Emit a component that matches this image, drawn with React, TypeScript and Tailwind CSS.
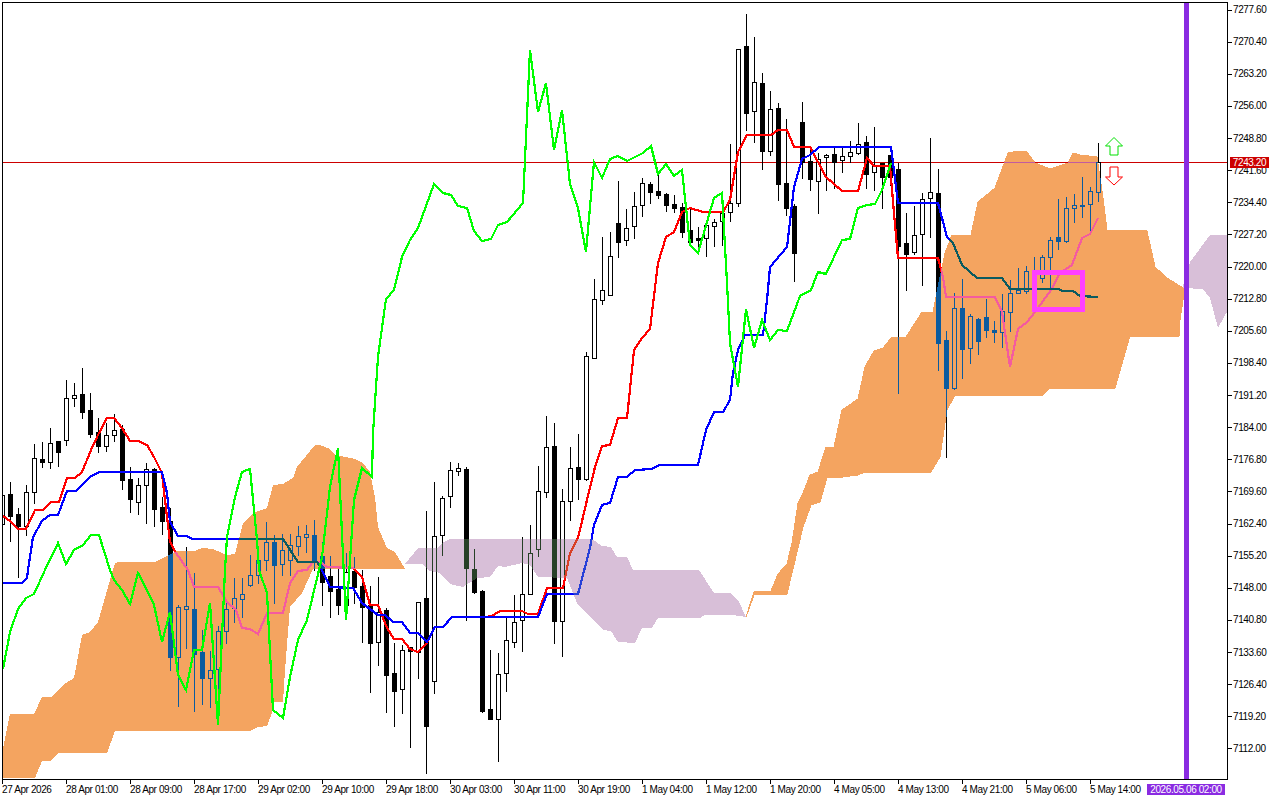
type Point = [number, number];
// high, body top, body bottom, low, 1 = bull (hollow)
type Candle = [number, number, number, number, number];

const candles: Candle[] = [
  [490, 495, 524, 540, 1], [482, 494, 516, 541, 0], [508, 514, 526, 577, 0], [485, 492, 526, 535, 1],
  [444, 458, 492, 503, 1], [442, 459, 462, 467, 0], [428, 443, 462, 468, 1], [441, 441, 452, 466, 0],
  [380, 398, 440, 445, 1], [383, 395, 398, 406, 1], [368, 394, 412, 418, 0], [393, 410, 434, 437, 0],
  [418, 432, 446, 452, 0], [423, 435, 446, 451, 1], [414, 430, 435, 441, 1], [425, 429, 480, 489, 0],
  [467, 479, 499, 512, 0], [478, 485, 502, 514, 1], [463, 469, 485, 523, 1], [468, 469, 509, 526, 0],
  [497, 507, 521, 534, 0], [508, 521, 657, 670, 0], [605, 607, 657, 706, 1], [547, 606, 609, 648, 1],
  [573, 609, 654, 711, 0], [630, 652, 678, 704, 0], [651, 670, 678, 707, 1], [626, 631, 669, 710, 1],
  [602, 609, 631, 643, 1], [578, 598, 608, 622, 1], [578, 594, 599, 617, 1], [555, 575, 585, 586, 1],
  [555, 560, 575, 583, 1], [522, 542, 560, 570, 1], [535, 542, 565, 603, 0], [534, 550, 564, 575, 1],
  [534, 545, 560, 575, 1], [526, 536, 546, 555, 1], [525, 534, 537, 552, 1], [520, 535, 560, 570, 0],
  [542, 556, 582, 605, 0], [556, 576, 591, 617, 0], [566, 589, 605, 614, 0], [553, 572, 605, 605, 1],
  [557, 571, 587, 603, 0], [570, 586, 607, 642, 0], [586, 605, 643, 692, 0], [577, 612, 642, 665, 1],
  [608, 610, 675, 712, 0], [643, 673, 691, 726, 0], [645, 650, 689, 713, 1], [647, 647, 651, 747, 0],
  [602, 602, 652, 678, 1], [511, 598, 726, 773, 0], [482, 536, 681, 693, 1], [496, 498, 535, 555, 1],
  [462, 470, 496, 507, 1], [463, 468, 471, 475, 1], [467, 469, 568, 620, 0], [549, 569, 592, 593, 0],
  [590, 591, 711, 712, 0], [650, 709, 719, 719, 0], [653, 674, 719, 761, 1], [618, 640, 673, 691, 1],
  [595, 622, 642, 647, 1], [537, 594, 620, 651, 1], [525, 553, 594, 594, 1], [466, 491, 549, 556, 1],
  [416, 447, 492, 497, 1], [423, 446, 621, 643, 0], [489, 501, 621, 656, 1], [447, 468, 501, 520, 1],
  [434, 467, 479, 499, 0], [352, 356, 479, 480, 1], [279, 299, 358, 358, 1], [237, 290, 300, 304, 1],
  [232, 256, 295, 295, 1], [181, 223, 242, 257, 0], [209, 228, 240, 245, 1], [192, 206, 226, 238, 1],
  [178, 183, 205, 216, 1], [182, 184, 192, 203, 0], [175, 191, 195, 198, 0], [193, 194, 205, 211, 0],
  [195, 204, 208, 212, 0], [203, 207, 232, 237, 0], [208, 230, 242, 242, 0], [227, 238, 240, 252, 0],
  [222, 225, 238, 256, 1], [219, 222, 226, 246, 1], [213, 213, 221, 245, 1], [144, 203, 212, 221, 1],
  [49, 49, 203, 206, 1], [14, 46, 113, 130, 0], [37, 82, 111, 142, 1], [73, 83, 151, 169, 0],
  [91, 109, 151, 155, 1], [103, 108, 184, 200, 0], [119, 183, 208, 215, 0], [204, 206, 253, 281, 0],
  [102, 122, 162, 178, 0], [147, 161, 179, 190, 0], [153, 159, 181, 213, 1], [154, 155, 157, 190, 1],
  [147, 154, 162, 188, 0], [148, 156, 160, 172, 1], [141, 152, 156, 162, 1], [123, 144, 153, 154, 1],
  [136, 142, 174, 188, 0], [127, 165, 172, 190, 1], [163, 163, 177, 208, 0], [155, 155, 177, 185, 0],
  [163, 169, 246, 393, 0], [213, 243, 254, 290, 0], [206, 235, 252, 254, 1], [193, 199, 234, 285, 1],
  [138, 192, 198, 237, 1], [169, 193, 343, 370, 0], [331, 340, 388, 457, 0], [293, 308, 388, 389, 1],
  [279, 308, 349, 378, 0], [314, 316, 348, 363, 1], [318, 319, 341, 354, 0], [299, 317, 330, 337, 0],
  [321, 330, 332, 342, 0], [294, 311, 332, 347, 1], [280, 293, 312, 331, 1], [268, 290, 293, 293, 1],
  [266, 271, 291, 293, 1], [257, 270, 285, 290, 0], [255, 257, 278, 282, 1], [237, 240, 257, 292, 1],
  [199, 237, 241, 249, 0], [197, 208, 241, 242, 1], [194, 205, 208, 222, 1], [177, 205, 206, 217, 0],
  [187, 191, 204, 232, 1], [143, 162, 192, 201, 1],
];

const tenkan: Point[] = [
  [3, 516], [10, 521], [18, 529], [26, 529], [35, 510], [43, 510], [51, 502], [59, 502], [67, 478], [75, 478],
  [82, 472], [91, 450], [98, 435], [107, 418], [114, 418], [122, 428], [130, 441], [138, 441], [147, 445],
  [154, 457], [162, 473], [165, 500], [170, 542], [176, 553], [188, 570], [194, 587], [218, 587], [227, 602],
  [236, 610], [242, 628], [250, 629], [258, 634], [267, 613], [283, 613], [290, 583], [298, 571], [307, 570],
  [313, 562], [320, 562], [327, 567], [353, 568], [362, 577], [370, 605], [378, 605], [387, 628], [394, 639],
  [402, 639], [410, 649], [418, 652], [427, 643], [435, 627], [443, 627], [452, 617], [486, 617], [492, 616],
  [500, 611], [522, 611], [528, 614], [538, 614], [547, 588], [563, 588], [570, 553], [578, 538], [587, 500],
  [595, 467], [602, 446], [610, 445], [618, 418], [627, 418], [629, 399], [634, 350], [642, 338], [650, 329],
  [658, 263], [666, 237], [674, 232], [682, 212], [690, 208], [703, 212], [723, 212], [730, 200], [738, 152],
  [747, 135], [771, 135], [778, 130], [787, 130], [794, 147], [810, 147], [826, 177], [842, 191], [858, 191],
  [867, 158], [874, 166], [890, 166], [894, 213], [898, 258], [938, 258], [943, 277], [946, 297], [995, 297],
  [1002, 312], [1010, 367], [1018, 329], [1027, 322], [1035, 312], [1051, 290], [1060, 273], [1072, 265],
  [1082, 238], [1090, 234], [1098, 218],
];

const kijun: Point[] = [
  [3, 583], [22, 583], [27, 578], [28, 570], [33, 537], [42, 521], [50, 515], [58, 515], [67, 491], [76, 491],
  [90, 477], [99, 472], [162, 472], [167, 493], [170, 522], [178, 536], [187, 536], [192, 539], [283, 539],
  [298, 562], [317, 562], [322, 570], [330, 587], [353, 588], [362, 603], [378, 615], [385, 615], [393, 622],
  [402, 622], [410, 633], [418, 633], [427, 642], [435, 627], [443, 627], [452, 617], [538, 617], [547, 594],
  [578, 594], [590, 548], [594, 525], [602, 505], [610, 503], [618, 477], [627, 477], [635, 470], [652, 469],
  [659, 465], [698, 465], [706, 430], [714, 412], [723, 412], [730, 400], [733, 373], [738, 350], [745, 335],
  [763, 335], [767, 300], [770, 267], [787, 247], [794, 187], [802, 159], [810, 155], [819, 147], [891, 147],
  [898, 203], [938, 203], [947, 237], [953, 243], [962, 265], [977, 278], [1002, 278], [1010, 289], [1058, 289],
  [1063, 291], [1073, 291], [1080, 296], [1098, 297],
];

const chikou: Point[] = [
  [3, 669], [10, 632], [18, 609], [26, 598], [34, 594], [45, 570], [58, 543], [66, 564], [74, 550], [83, 545],
  [91, 535], [99, 535], [110, 570], [114, 580], [122, 590], [130, 604], [138, 573], [147, 590], [154, 605],
  [162, 642], [170, 612], [178, 675], [186, 690], [194, 650], [202, 650], [210, 603], [218, 725], [225, 570],
  [227, 537], [235, 497], [242, 472], [250, 469], [257, 540], [259, 570], [267, 593], [273, 710], [283, 718],
  [290, 677], [298, 640], [307, 620], [319, 570], [322, 557], [330, 487], [338, 448], [346, 620], [354, 500],
  [362, 468], [372, 477], [373, 433], [378, 357], [386, 299], [394, 290], [402, 257], [410, 240], [418, 228],
  [434, 184], [443, 193], [451, 195], [458, 206], [467, 208], [474, 231], [482, 241], [491, 239], [498, 225],
  [507, 222], [523, 203], [530, 50], [538, 112], [546, 83], [554, 150], [562, 110], [570, 184], [578, 208],
  [586, 252], [594, 162], [602, 178], [610, 159], [618, 156], [627, 161], [643, 153], [651, 146], [658, 174],
  [666, 164], [674, 176], [682, 170], [690, 245], [698, 253], [714, 198], [722, 193], [727, 283], [730, 343],
  [738, 387], [746, 309], [754, 348], [762, 320], [770, 340], [778, 330], [787, 331], [800, 296], [811, 290],
  [818, 272], [826, 274], [842, 240], [850, 239], [858, 208], [867, 205], [875, 204], [882, 190], [891, 163],
];

const cloudBull: Point[] = [
  [3, 748], [10, 714], [34, 714], [42, 697], [52, 697], [63, 685], [74, 678], [82, 635], [90, 632], [98, 622],
  [110, 580], [115, 563], [118, 562], [155, 562], [177, 551], [195, 551], [202, 548], [213, 549], [227, 555],
  [235, 554], [243, 523], [253, 513], [267, 508], [273, 485], [283, 484], [293, 478], [297, 467], [315, 445],
  [320, 445], [330, 449], [335, 455], [345, 457], [355, 459], [363, 463], [370, 472], [375, 497], [378, 527],
  [387, 548], [395, 552], [405, 569],
  [313, 569], [302, 593], [290, 607], [285, 670], [283, 702], [274, 702], [272, 713], [267, 726], [258, 727],
  [250, 731], [115, 731], [107, 753], [58, 753], [50, 761], [42, 761], [35, 778], [3, 778],
];

const cloudBear: Point[] = [
  [405, 564], [418, 548], [437, 548], [442, 543], [450, 539], [592, 539], [602, 546], [611, 547], [617, 557],
  [627, 557], [633, 570], [699, 570], [714, 593], [730, 593], [738, 600], [746, 617],
  [733, 615], [705, 615], [700, 618], [658, 618], [652, 628], [642, 628], [635, 643], [618, 642], [611, 631],
  [603, 630], [577, 603], [567, 578], [538, 577], [530, 565], [522, 563], [505, 567], [498, 566], [490, 577],
  [477, 578], [463, 587], [450, 584], [440, 573], [430, 571], [422, 564],
];

const cloudBull2: Point[] = [
  [746, 617], [754, 592], [771, 591], [778, 574], [787, 564], [792, 543], [798, 503], [803, 493], [810, 475],
  [818, 472], [826, 447], [834, 447], [842, 410], [858, 399], [865, 367], [874, 351], [883, 348], [892, 337],
  [906, 337], [922, 312], [933, 312], [945, 253], [952, 235], [971, 235], [978, 202], [995, 188], [1008, 153],
  [1018, 151], [1027, 152], [1035, 163], [1050, 169], [1068, 163], [1073, 153], [1080, 155], [1097, 157], [1103, 198],
  [1107, 230], [1147, 231], [1155, 267], [1167, 278], [1183, 288], [1183, 300], [1180, 320], [1179, 336],
  [1130, 336], [1115, 388], [1050, 388], [1043, 395], [955, 395], [947, 410], [940, 457], [931, 472], [865, 472],
  [858, 475], [843, 477], [827, 478], [820, 502], [811, 505], [803, 527], [787, 594], [754, 595],
];

const cloudBear2: Point[] = [
  [1183, 286], [1190, 262], [1210, 235], [1228, 235], [1228, 310], [1218, 328], [1210, 298], [1203, 289], [1183, 288],
];

const priceLabels = [
  "7277.60", "7270.40", "7263.20", "7256.00", "7248.80", "7241.60", "7234.40", "7227.20",
  "7220.00", "7212.80", "7205.60", "7198.40", "7191.20", "7184.00", "7176.80", "7169.60",
  "7162.40", "7155.20", "7148.00", "7140.80", "7133.60", "7126.40", "7119.20", "7112.00",
];

const timeLabels = [
  "27 Apr 2026", "28 Apr 01:00", "28 Apr 09:00", "28 Apr 17:00", "29 Apr 02:00", "29 Apr 10:00",
  "29 Apr 18:00", "30 Apr 03:00", "30 Apr 11:00", "30 Apr 19:00", "1 May 04:00", "1 May 12:00",
  "1 May 20:00", "4 May 05:00", "4 May 13:00", "4 May 21:00", "5 May 06:00", "5 May 14:00",
];

const toPoints = (pts: Point[]) => pts.map((p) => p.join(",")).join(" ");

function CandleBar({ candle, index }: { candle: Candle; index: number }) {
  const [high, top, bottom, low, bull] = candle;
  const x = 2 + 8 * index;
  return (
    <g>
      <rect x={x} y={high} width={1} height={low - high + 1} fill="#000000" />
      <rect x={x - 2} y={top} width={5} height={bottom - top + 1} fill="#000000" />
      {bull === 1 && bottom - top > 1 && (
        <rect x={x - 1} y={top + 1} width={3} height={bottom - top - 1} fill="#ffffff" />
      )}
    </g>
  );
}

function Chart() {
  return (
    <svg width={1224} height={776} viewBox="3 3 1224 776" shapeRendering="crispEdges" className="block isolate">
      <rect x={0} y={0} width={1280} height={800} fill="#ffffff" />
      <rect x={0} y={162} width={1280} height={1} fill="#cc0000" />
      {candles.map((c, i) => (
        <CandleBar key={i} candle={c} index={i} />
      ))}
      <polyline points={toPoints(tenkan)} fill="none" stroke="#ff0000" strokeWidth={2.2} />
      <polyline points={toPoints(kijun)} fill="none" stroke="#0000ff" strokeWidth={2.2} />
      {/* the terminal XORs the cloud onto the candles and lines */}
      <polygon points={toPoints(cloudBull)} fill="#0b5b9f" className="mix-blend-difference" />
      <polygon points={toPoints(cloudBull2)} fill="#0b5b9f" stroke="#0b5b9f" strokeWidth={1} className="mix-blend-difference" />
      <polygon points={toPoints(cloudBear)} fill="#274027" className="mix-blend-difference" />
      <polygon points={toPoints(cloudBear2)} fill="#274027" className="mix-blend-difference" />
      <polyline points={toPoints(chikou)} fill="none" stroke="#00ff00" strokeWidth={2.2} />
      <rect x={1034.5} y={272.5} width={48} height={37} fill="none" stroke="#ff40ff" strokeWidth={5} />
      <rect x={1184} y={0} width={5} height={800} fill="#8a2be2" />
      <polygon
        points="1114,137.5 1122.5,146 1118,146 1118,155 1110,155 1110,146 1105.5,146"
        fill="#ffffff"
        stroke="#00e000"
        strokeWidth={1}
        shapeRendering="auto"
      />
      <polygon
        points="1114,185 1122.5,177 1118,177 1118,167 1110,167 1110,177 1105.5,177"
        fill="#ffffff"
        stroke="#ff0000"
        strokeWidth={1}
        shapeRendering="auto"
      />
    </svg>
  );
}

export default function App() {
  return (
    <div className="w-[1280px] h-[800px] bg-white overflow-hidden pl-[2px] pt-[2px] flex flex-col font-['Liberation_Sans',sans-serif] text-[10px] tracking-[-0.4px] text-black">
      <div className="flex h-[778px]">
        <div className="w-[1226px] h-[778px] border border-black">
          <Chart />
        </div>
        <div className="relative flex-1 flex flex-col justify-between pt-[2px] pb-[25px]">
          {priceLabels.map((label) => (
            <div key={label} className="flex items-center h-3 leading-3">
              <span className="w-1 h-px bg-black" />
              <span className="ml-[1px]">{label}</span>
            </div>
          ))}
          <div className="absolute left-[2px] top-[155px] w-[39px] h-[11px] bg-[#cc0000] text-white leading-[11px] text-center">
            7243.20
          </div>
        </div>
      </div>
      <div className="relative flex h-[20px]">
        {timeLabels.map((label) => (
          <div key={label} className="w-16 shrink-0 flex flex-col">
            <span className="w-px h-1 bg-black" />
            <span className="leading-[11px] whitespace-nowrap">{label}</span>
          </div>
        ))}
        <div className="absolute left-[1145px] top-[4px] w-[78px] h-[11px] bg-[#8a2be2] text-white leading-[11px] text-center whitespace-nowrap">
          2026.05.06 02:00
        </div>
      </div>
    </div>
  );
}
